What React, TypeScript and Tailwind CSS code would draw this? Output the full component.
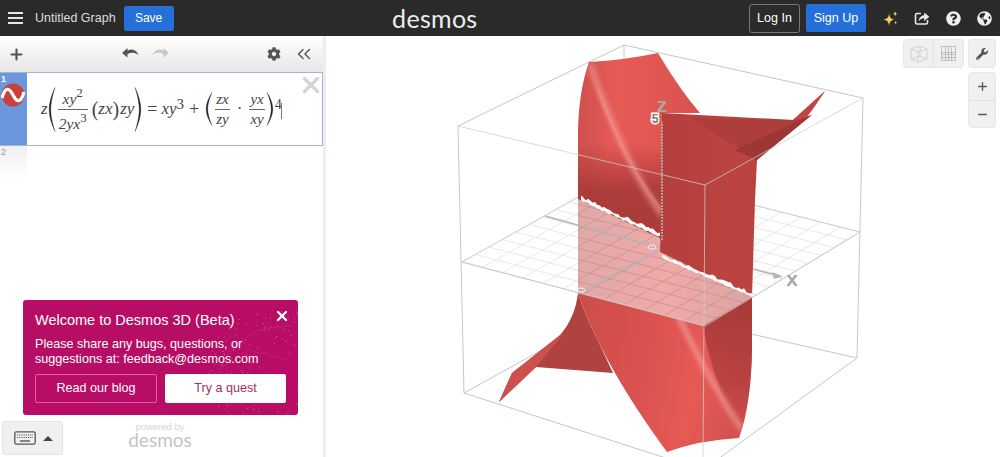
import React from 'react';
import { FaCog, FaGlobeAmericas, FaQuestionCircle, FaWrench } from 'react-icons/fa';
import { Plus, Minus, X, ChevronsLeft } from 'lucide-react';

const serif = 'font-["Liberation_Serif",serif]';

const Paren: React.FC<{ h: number; flip?: boolean }> = ({ h, flip }) => (
  <svg width="8" height={h} viewBox={`0 0 8 ${h}`} className={flip ? 'scale-x-[-1]' : ''}>
    <path d={`M7 0.5C2 ${h * 0.25} 1.2 ${h * 0.4} 1.2 ${h / 2}C1.2 ${h * 0.6} 2 ${h * 0.75} 7 ${h - 0.5}C3.6 ${h * 0.75} 2.8 ${h * 0.6} 2.8 ${h / 2}C2.8 ${h * 0.4} 3.6 ${h * 0.25} 7 0.5Z`} fill="#222" stroke="#222" strokeWidth="0.3" />
  </svg>
);

const Frac: React.FC<{ top: React.ReactNode; bottom: React.ReactNode; className?: string }> = ({ top, bottom, className }) => (
  <span className={`inline-flex flex-col items-center leading-none ${className ?? ''}`}>
    <span className="px-[1px] pb-[2px] italic whitespace-nowrap">{top}</span>
    <span className="self-stretch border-t border-[#666] px-[1px] pt-[2px] italic text-center whitespace-nowrap">{bottom}</span>
  </span>
);

const Sup: React.FC<{ children: React.ReactNode }> = ({ children }) => (
  <sup className="not-italic text-[13px] leading-none relative -top-[1px] align-super">{children}</sup>
);

const MathRow = () => (
  <div className={`${serif} flex items-center text-[17px] text-[#444] pl-[14px]`}>
    <span className="italic">z</span>
    <Paren h={45} />
    <Frac className="ml-[2px] text-[15.500px]" top={<>xy<Sup>2</Sup></>} bottom={<>2yx<Sup>3</Sup></>} />
    <span className="ml-[4px] text-[20px] leading-none">(</span>
    <span className="italic">zx</span>
    <span className="text-[20px] leading-none">)</span>
    <span className="italic ml-[1px]">zy</span>
    <Paren h={45} flip />
    <span className="ml-[5px] text-[18px]">=</span>
    <span className="ml-[4px] italic">xy</span>
    <span className="text-[15px] -mt-[10px]">3</span>
    <span className="ml-[5px] text-[18px]">+</span>
    <span className="ml-[6px]"><Paren h={34} /></span>
    <Frac className="ml-[2px] text-[15px]" top="zx" bottom="zy" />
    <span className="mx-[7px]">·</span>
    <Frac className="text-[15px]" top="yx" bottom="xy" />
    <span className="ml-[1px]"><Paren h={34} flip /></span>
    <span className="text-[14px] -mt-[9px] ml-[1px]">4</span>
    <span className="w-px h-[16px] bg-[#777] -ml-[1px] mt-[3px]" />
  </div>
);

// fixed seed so the picture stays the same
const noise = (n: number) => {
  const v = Math.sin(n * 12.9898) * 43758.5453;
  return v - Math.floor(v);
};

// points on the z = 0 plane, corners in page pixels
const A = [462, 262];
const B = [623, 172];
const C = [860, 232];
const D = [705, 326];
const mix = (p: number[], q: number[], t: number) => [p[0] + (q[0] - p[0]) * t, p[1] + (q[1] - p[1]) * t];
const ticks = Array.from({ length: 11 }, (_, i) => (i + 1) / 12);

const PlaneGrid: React.FC<{ color: string }> = ({ color }) => (
  <g stroke={color} strokeWidth="0.8" fill="none">
    {ticks.map(t => {
      const p = mix(A, B, t);
      const q = mix(D, C, t);
      const r = mix(A, D, t);
      const s = mix(B, C, t);
      return <path key={t} d={`M${p[0]} ${p[1]}L${q[0]} ${q[1]}M${r[0]} ${r[1]}L${s[0]} ${s[1]}`} />;
    })}
  </g>
);

// the noisy white seam where the surface crosses the plane
const seam = (p: number[], q: number[], seed: number) => {
  const n = 34;
  const top: string[] = [];
  const bottom: string[] = [];
  for (let i = 0; i <= n; i++) {
    const [x, y] = mix(p, q, i / n);
    top.push(`${x.toFixed(1)} ${(y - 1 - noise(seed + i) * 3.5).toFixed(1)}`);
    bottom.push(`${x.toFixed(1)} ${(y + noise(seed + i + 100) * 1.5).toFixed(1)}`);
  }
  return `M${top.join('L')}L${bottom.reverse().join('L')}Z`;
};

const upperPath = 'M589 62Q625 60 658 53Q680 90 700 113L662 113L661 240L578 200L578 130Q579 90 589 62Z';
const lowerPath = 'M578 293L703 326L752 297L752 350Q751 405 739 438Q700 440 667 452Q625 395 600 345Q585 315 578 293Z';
const pinkPath = 'M578 199L660 238L660 252L752 297L703 326L578 293Z';

const Graph3D = () => (
  <svg viewBox="326 36 674 421" className="block w-full h-full">
    <defs>
      <linearGradient id="upper" x1="0" y1="0" x2="1" y2="0">
        <stop offset="0" stopColor="#cf504d" />
        <stop offset="0.3" stopColor="#e65a55" />
        <stop offset="0.7" stopColor="#e25652" />
        <stop offset="1" stopColor="#d8524e" />
      </linearGradient>
      <linearGradient id="upperShade" x1="0" y1="0" x2="0" y2="1">
        <stop offset="0.3" stopColor="#a83a38" stopOpacity="0" />
        <stop offset="0.62" stopColor="#a83a38" stopOpacity="0.9" />
        <stop offset="1" stopColor="#a83a38" stopOpacity="1" />
      </linearGradient>
      <linearGradient id="wall" x1="0" y1="0" x2="1" y2="0">
        <stop offset="0" stopColor="#b53f3d" />
        <stop offset="0.5" stopColor="#bc4340" />
        <stop offset="1" stopColor="#a83b39" />
      </linearGradient>
      <linearGradient id="lower" x1="0" y1="0" x2="1" y2="0.2">
        <stop offset="0" stopColor="#cc4d4a" />
        <stop offset="0.5" stopColor="#dc5350" />
        <stop offset="0.75" stopColor="#e65a55" />
        <stop offset="1" stopColor="#d65250" />
      </linearGradient>
      <linearGradient id="lowerShade" x1="0" y1="0" x2="0" y2="1">
        <stop offset="0" stopColor="#a83a38" stopOpacity="1" />
        <stop offset="0.6" stopColor="#a83a38" stopOpacity="0.65" />
        <stop offset="1" stopColor="#a83a38" stopOpacity="0" />
      </linearGradient>
      <linearGradient id="pink" x1="0" y1="0" x2="1" y2="0">
        <stop offset="0" stopColor="#dfa9a7" />
        <stop offset="0.5" stopColor="#f0aaa9" />
        <stop offset="1" stopColor="#d9a5a3" />
      </linearGradient>
      <filter id="soft" x="-30%" y="-30%" width="160%" height="160%"><feGaussianBlur stdDeviation="2.500" /></filter>
      <filter id="softer" x="-30%" y="-30%" width="160%" height="160%"><feGaussianBlur stdDeviation="0.800" /></filter>
      <clipPath id="upperClip"><path d={upperPath} /></clipPath>
      <clipPath id="lowerClip"><path d={lowerPath} /></clipPath>
      <clipPath id="pinkClip"><path d={pinkPath} /></clipPath>
    </defs>

    {/* back edges of the box */}
    <path d="M624 45L458 126L464 393L703 470M624 45L863 98L857 358L703 470M624 45V305M464 393L623 305L857 358" stroke="#c6c6c6" fill="none" />

    <PlaneGrid color="#e2e2e2" />
    <path d="M462 262L623 172L860 232L705 326Z" fill="none" stroke="#c8c8c8" />

    {/* upper sheet */}
    <path d={upperPath} fill="url(#upper)" />
    <g clipPath="url(#upperClip)">
      <rect x="578" y="100" width="84" height="145" fill="url(#upperShade)" />
      <path d="M590 64Q625 165 662 215" stroke="#f39a96" strokeWidth="6" fill="none" filter="url(#soft)" opacity="0.65" />
      <path d="M598 90Q628 170 662 210" stroke="#fbb4b0" strokeWidth="1.200" fill="none" filter="url(#softer)" opacity="0.6" />
    </g>

    {/* translucent part at the plane */}
    <path d={pinkPath} fill="url(#pink)" />
    <g clipPath="url(#pinkClip)"><PlaneGrid color="#c9918f" /></g>

    {/* dark wall */}
    <path d="M662 113L793 120L825 91L812 110L757 160L755 200L752 297L660 252L661 200Z" fill="url(#wall)" />
    <path d="M690 118L793 120L812 115L750 155Z" fill="#ad3e3c" />
    <path d="M812 115L757 160L735 150Z" fill="#9c3735" />
    <path d="M793 120L825 91L812 110L807 117Z" fill="#c14644" />

    {/* jagged white strips */}
    <path d={seam([581, 200], [660, 236], 10)} fill="#fff" />
    <path d={seam([662, 257], [752, 296], 70)} fill="#fff" />

    {/* lower sheet */}
    <path d="M578 293Q575 318 560 335L512 373L499 402L536 367L613 373L600 345Q585 315 578 293Z" fill="#b04240" />
    <path d="M564 333L512 373L499 402L536 367Z" fill="#cf4f4d" />
    <path d={lowerPath} fill="url(#lower)" />
    <g clipPath="url(#lowerClip)">
      <path d="M703 326L752 297V440H739L735 425Q710 370 703 326Z" fill="url(#lowerShade)" />
      <path d="M673 305Q700 365 742 430" stroke="#f4a09c" strokeWidth="5" fill="none" filter="url(#soft)" opacity="0.8" />
    </g>

    {/* axes */}
    <g stroke="#b5b5b5" strokeWidth="1.600" fill="none">
      <path d="M545 216L657 247" />
      <path d="M660 250L580 292" />
      <path d="M753 269L780 276" />
      <path d="M662 240V122" strokeDasharray="2 1" />
    </g>
    <path d="M783 276.500L772 272L774 279Z" fill="#b5b5b5" />
    <ellipse cx="652" cy="247" rx="4" ry="2" fill="none" stroke="#fff" opacity="0.8" />
    <ellipse cx="581" cy="290" rx="4" ry="2" fill="none" stroke="#fff" opacity="0.8" />

    {/* front edges, seen through the surface */}
    <path d="M458 126L705 185L863 98M705 185L703 460M462 262L705 326L860 232" stroke="#cdcdcd" strokeWidth="0.900" fill="none" opacity="0.85" />

    <text x="662" y="112" textAnchor="middle" className="font-['Liberation_Sans',sans-serif] font-bold text-[21px]" fill="#a8a8a8">z</text>
    <text x="655" y="123" textAnchor="middle" stroke="#fff" strokeWidth="3" className="font-['Liberation_Sans',sans-serif] font-bold text-[12px] [paint-order:stroke]" fill="#777">5</text>
    <text x="792" y="286" textAnchor="middle" className="font-['Liberation_Sans',sans-serif] font-bold text-[21px]" fill="#a8a8a8">x</text>
  </svg>
);

const dots = Array.from({ length: 260 }, (_, i) => {
  const a = noise(i + 1) * Math.PI * 2;
  const r = 20 + Math.sqrt(noise(i + 500)) * 45;
  return { x: 74 + Math.cos(a) * r, y: 72 + Math.sin(a) * r, o: 0.2 + noise(i + 900) * 0.55 };
});

const Banner = () => (
  <div className="absolute left-[23px] top-[300px] w-[275px] h-[115px] rounded-[3px] bg-[#b80d64] overflow-hidden text-white font-['Liberation_Sans',sans-serif]">
    <svg viewBox="0 0 100 115" className="absolute right-0 top-0 w-[100px] h-[115px]">
      {dots.map((d, i) => (
        <circle key={i} cx={d.x} cy={d.y} r="0.550" fill="#f8a5cc" opacity={d.o} />
      ))}
      <path d="M30 50L60 30L95 25M20 70L50 50L90 60M40 95L55 60L85 90" stroke="#f8a5cc" strokeWidth="0.300" fill="none" opacity="0.4" />
    </svg>
    <div className="relative flex flex-col px-3 pt-[10px]">
      <div className="text-[14.500px] leading-[20px]">Welcome to Desmos 3D (Beta)</div>
      <div className="mt-[7px] text-[12.600px] leading-[15px]">
        Please share any bugs, questions, or<br />suggestions at: feedback@desmos.com
      </div>
      <div className="mt-[7px] flex gap-2">
        <div className="w-[122px] h-[29px] flex items-center justify-center rounded-[2px] border border-[#dd5f9e] text-[12.600px]">Read our blog</div>
        <div className="w-[121px] h-[29px] flex items-center justify-center rounded-[2px] bg-white text-[#a0306a] text-[12.600px]">Try a quest</div>
      </div>
    </div>
    <X size={16} strokeWidth={3.500} className="absolute right-[8px] top-[8px]" />
  </div>
);

const Sparkles = () => (
  <svg width="15" height="15" viewBox="0 0 16 16" fill="#f3cf55">
    <path d="M6.500 2C7 6.500 8 8 12 9C8 10 7 11.500 6.500 16C6 11.500 5 10 0.500 9C5 8 6 6.500 6.500 2Z" />
    <path d="M13 0C13.300 2 13.800 2.500 15.500 3C13.800 3.500 13.300 4 13 6C12.700 4 12.200 3.500 10.500 3C12.200 2.500 12.700 2 13 0Z" />
    <path d="M13.500 10.500C13.700 11.800 14 12.200 15.200 12.500C14 12.800 13.700 13.200 13.500 14.500C13.300 13.200 13 12.800 11.800 12.500C13 12.200 13.300 11.800 13.500 10.500Z" />
  </svg>
);

const Header = () => (
  <header className="h-[36px] flex items-center bg-[#2a2a2a] text-white font-['Liberation_Sans',sans-serif] shrink-0">
    <div className="ml-[8px] w-[15px] flex flex-col gap-[3px]">
      <span className="h-[2px] bg-[#e6e6e6]" />
      <span className="h-[2px] bg-[#e6e6e6]" />
      <span className="h-[2px] bg-[#e6e6e6]" />
    </div>
    <span className="ml-[12px] text-[12.500px] text-[#dddddd]">Untitled Graph</span>
    <div className="ml-[8px] w-[50px] h-[25px] flex items-center justify-center rounded-[2px] bg-[#2470d8] text-[12px]">Save</div>
    <div className="flex-1 flex justify-center pr-[53px]">
      <span className="font-['Lato',sans-serif] text-[25px] leading-none tracking-[0.3px] text-[#eeeeee]">desmos</span>
    </div>
    <div className="w-[51px] h-[29px] flex items-center justify-center rounded-[3px] border border-[#777] text-[12.500px]">Log In</div>
    <div className="ml-[6px] w-[60px] h-[28px] flex items-center justify-center rounded-[2px] bg-[#2470d8] text-[12.500px]">Sign Up</div>
    <div className="ml-[17px] w-[15px] flex"><Sparkles /></div>
    <svg width="16" height="16" viewBox="0 0 16 16" fill="none" stroke="#e8e8e8" strokeWidth="1.600" className="ml-[16px]">
      <path d="M7 3.500H3Q1.500 3.500 1.500 5V12.500Q1.500 14 3 14H12Q13.500 14 13.500 12.500V10" />
      <path d="M5 10.500C5.500 7 8 5.600 10.500 5.600V3L15 6.800L10.500 10.500V8C8.500 8 6.500 8.500 5 10.500Z" fill="#e8e8e8" strokeWidth="0.600" />
    </svg>
    <FaQuestionCircle size={15} className="ml-[16px] text-[#f0f0f0]" />
    <FaGlobeAmericas size={15} className="ml-[16px] mr-[8px] text-[#f0f0f0]" />
  </header>
);

const UndoArrow: React.FC<{ flip?: boolean; color: string; className?: string }> = ({ flip, color, className }) => (
  <svg width="17" height="11" viewBox="0 0 17 11" fill={color} className={`-mt-[3px] ${flip ? 'scale-x-[-1]' : ''} ${className ?? ''}`}>
    <path d="M0 6L5.500 1V3.600C10 1 14.500 2.500 17 8.500C14 5.500 10 5 5.500 7V10.500Z" />
  </svg>
);

const Toolbar = () => (
  <div className="h-[36px] flex items-center bg-gradient-to-b from-white via-[#f3f3f3] to-[#e6e6e6] text-[#555]">
    <Plus size={17} strokeWidth={3} className="ml-[8px]" />
    <UndoArrow color="#555" className="ml-[97px]" />
    <UndoArrow color="#c8c8c8" flip className="ml-[13px]" />
    <FaCog size={14} className="ml-[98px]" />
    <ChevronsLeft size={22} strokeWidth={1.500} className="ml-[12px]" />
  </div>
);

const ExpressionList = () => (
  <div className="flex-1 bg-white">
    <div className="h-[74px] flex border border-[#9fb6d8]">
      <div className="w-[27px] -ml-px bg-[#6b98dc] text-white relative">
        <span className="absolute left-[1px] top-0 text-[9px] leading-[12px] font-bold font-['Liberation_Sans',sans-serif]">1</span>
        <svg width="24" height="24" viewBox="0 0 24 24" className="absolute left-[1px] top-[10px]">
          <circle cx="12" cy="12" r="11.500" fill="#c9403c" />
          <path d="M1 15C4 4 8 4 12 12C16 20 20 20 23 9" fill="none" stroke="#fff" strokeWidth="3.200" />
        </svg>
      </div>
      <div className="flex-1 relative flex items-center">
        <MathRow />
        <X size={26} strokeWidth={3} className="absolute right-[-2px] top-[-1px] text-[#d4d4d4]" />
      </div>
    </div>
    <div className="w-[27px] h-[34px] bg-gradient-to-b from-[#f0f0f0] to-white text-[#999] text-[9px] leading-[12px] pl-[1px] font-['Liberation_Sans',sans-serif]">2</div>
  </div>
);

const KeyboardButton = () => (
  <div className="absolute left-[2px] top-[421px] w-[61px] h-[34px] flex items-center rounded-[3px] border border-[#e4e4e4] bg-[#f0f0f0]">
    <svg width="22" height="14" viewBox="0 0 22 14" fill="none" stroke="#555" className="ml-[11px]">
      <rect x="0.800" y="0.800" width="20.400" height="12.400" rx="1.500" strokeWidth="1.300" />
      <path d="M3 4H19M3 6.500H19" strokeWidth="1.200" strokeDasharray="1.200 1" />
      <path d="M6 10H16" strokeWidth="1.400" />
    </svg>
    <span className="ml-[7px] w-0 h-0 border-x-[5px] border-x-transparent border-b-[5px] border-b-[#444]" />
  </div>
);

const PoweredBy = () => (
  <div className="absolute left-[120px] top-[422px] w-[80px] flex flex-col items-center gap-[1px]">
    <span className="font-['Liberation_Sans',sans-serif] text-[9.500px] leading-[9px] text-[#d4d4d4]">powered by</span>
    <span className="font-['Lato',sans-serif] text-[19px] leading-[16px] text-[#c4c4c4]">desmos</span>
  </div>
);

const GraphControls = () => (
  <>
    <div className="absolute right-[36px] top-[3px] flex h-[29px] rounded-[4px] border border-[#e6e6e6] bg-[#f0f0f0]">
      <div className="w-[30px] flex items-center justify-center border-r border-[#e2e2e2]">
        <svg width="18" height="18" viewBox="0 0 18 18" fill="none" stroke="#cccccc" strokeWidth="0.800">
          <path d="M1 4L10 1L17 4V14L8 17L1 14ZM1 4L8 7L17 4M8 7V17M1 14L10 11L17 14M10 1V11" />
        </svg>
      </div>
      <div className="w-[29px] flex items-center justify-center">
        <svg width="15" height="15" viewBox="0 0 15 15" fill="none" stroke="#b4b4b4" strokeWidth="0.800">
          <path d="M.5.500H14.500V14.500H.5ZM.5 6.500H14.500M.5 8.500H14.500M.5 11.500H14.500M4.500 .5V14.500M7.500 .5V14.500M10.500 .5V14.500" />
        </svg>
      </div>
    </div>
    <div className="absolute right-[4px] top-[3px] w-[28px] h-[29px] flex items-center justify-center rounded-[4px] border border-[#e6e6e6] bg-[#f0f0f0] text-[#555]">
      <FaWrench size={12} />
    </div>
    <div className="absolute right-[4px] top-[36px] w-[28px] h-[56px] flex flex-col rounded-[4px] border border-[#e6e6e6] bg-[#f0f0f0] text-[#555]">
      <div className="h-[28px] flex items-center justify-center border-b border-[#e2e2e2]"><Plus size={13} strokeWidth={2.500} /></div>
      <div className="flex-1 flex items-center justify-center"><Minus size={13} strokeWidth={2.500} /></div>
    </div>
  </>
);

export default function App() {
  return (
    <div className="w-[1000px] h-[457px] flex flex-col overflow-hidden bg-white relative">
      <Header />
      <div className="flex-1 flex min-h-0">
        <aside className="w-[326px] shrink-0 flex flex-col border-r-[3px] border-[#eeeeee]">
          <Toolbar />
          <ExpressionList />
        </aside>
        <main className="flex-1 relative min-w-0">
          <Graph3D />
          <GraphControls />
        </main>
      </div>
      <Banner />
      <KeyboardButton />
      <PoweredBy />
    </div>
  );
}
